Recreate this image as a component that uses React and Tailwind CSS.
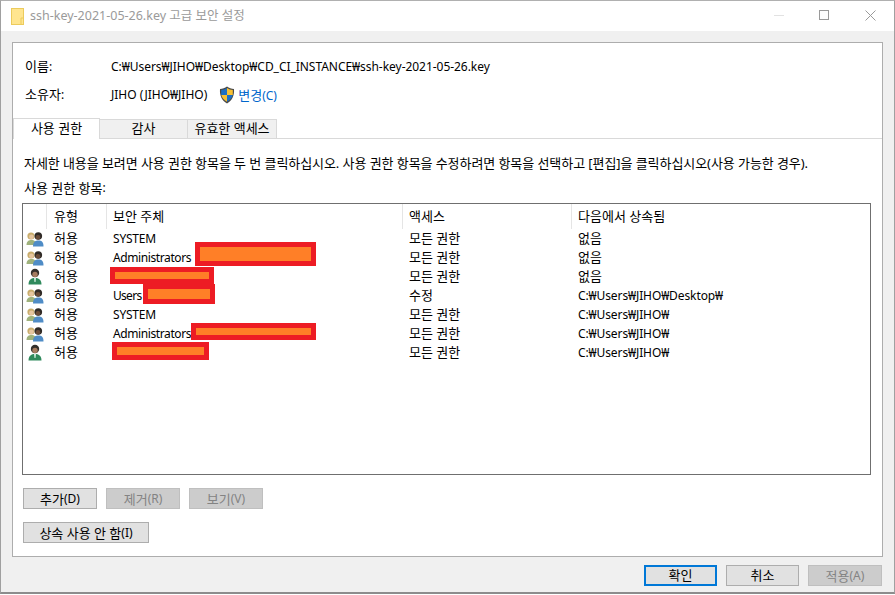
const font = "font-['Noto_Sans','Noto_Sans_CJK_KR',sans-serif]"

const rows = [
  { kind: 'group', name: 'SYSTEM', access: '모든 권한', from: '없음', track: 'tracking-[-0.2px]' },
  {
    kind: 'group',
    name: 'Administrators',
    access: '모든 권한',
    from: '없음',
    track: 'tracking-[-0.4px]',
    mark: 'left-[88px] top-[-6px] w-[121px] h-[24px]',
  },
  {
    kind: 'user',
    name: '',
    access: '모든 권한',
    from: '없음',
    mark: 'left-[3px] top-[0px] w-[104px] h-[17px]',
  },
  {
    kind: 'group',
    name: 'Users',
    access: '수정',
    from: 'C:₩Users₩JIHO₩Desktop₩',
    track: 'tracking-[-0.7px]',
    mark: 'left-[36px] top-[-2px] w-[72px] h-[20px]',
  },
  { kind: 'group', name: 'SYSTEM', access: '모든 권한', from: 'C:₩Users₩JIHO₩', track: 'tracking-[-0.2px]' },
  {
    kind: 'group',
    name: 'Administrators',
    access: '모든 권한',
    from: 'C:₩Users₩JIHO₩',
    track: 'tracking-[-0.4px]',
    mark: 'left-[84px] top-[-1px] w-[125px] h-[17px]',
  },
  {
    kind: 'user',
    name: '',
    access: '모든 권한',
    from: 'C:₩Users₩JIHO₩',
    mark: 'left-[5px] top-[-1px] w-[97px] h-[18px]',
  },
]

// hangul runs a size up from the latin, the way Malgun sits next to Segoe
function K({ children }) {
  return <span className="text-[13px]">{children}</span>
}

function GroupIcon() {
  return (
    <svg width="18" height="16" viewBox="0 0 18 16">
      <path d="M0.5 14 C0.5 10 3 9 5.5 9 C8 9 10 10 10 14 Z" fill="#9fb27c" />
      <circle cx="5" cy="5" r="3.6" fill="#c9ad6c" />
      <circle cx="5.4" cy="5.8" r="2.4" fill="#e6c6a0" />
      <path d="M7 15.5 C7 10.5 9.5 9.5 12.5 9.5 C15.5 9.5 17.5 10.5 17.5 15.5 Z" fill="#4f8cc6" />
      <circle cx="12.3" cy="5" r="3.8" fill="#2f2a26" />
      <circle cx="12" cy="6.2" r="2.3" fill="#6b4c38" />
    </svg>
  )
}

function UserIcon() {
  return (
    <svg width="14" height="17" viewBox="0 0 14 17">
      <path d="M0.5 16.5 C0.5 11.5 3.5 10 7 10 C10.5 10 13.5 11.5 13.5 16.5 Z" fill="#2f8a5c" />
      <path d="M6 10 L8 10 L7.5 14 L6.5 14 Z" fill="#d8efe2" />
      <circle cx="7" cy="5" r="4.2" fill="#332f2b" />
      <circle cx="7" cy="6.4" r="2.7" fill="#a57c60" />
    </svg>
  )
}

function ShieldIcon() {
  return (
    <svg width="16" height="18" viewBox="0 0 16 18">
      <path d="M8 0.5 C10 2 12.5 2.8 15 3 C15.5 10 13 14.5 8 17.5 C3 14.5 0.5 10 1 3 C3.5 2.8 6 2 8 0.5 Z" fill="#4a4a4a" />
      <path d="M8 2 C6.2 3.2 4.2 3.9 2.2 4.1 L2.2 9 L8 9 Z" fill="#1c6fc4" />
      <path d="M8 2 C9.8 3.2 11.8 3.9 13.8 4.1 L13.8 9 L8 9 Z" fill="#f8c032" />
      <path d="M2.3 9 L8 9 L8 15.8 C4.6 13.6 2.7 11.6 2.3 9 Z" fill="#f8c032" />
      <path d="M13.7 9 L8 9 L8 15.8 C11.4 13.6 13.3 11.6 13.7 9 Z" fill="#1c6fc4" />
    </svg>
  )
}

function FileIcon() {
  return (
    <svg width="13" height="17" viewBox="0 0 13 17">
      <rect x="0.5" y="0.5" width="12" height="16" fill="#ffe58f" stroke="#eccb5c" />
      <path d="M10 10 L10 16.5" stroke="#eccb5c" />
      <path d="M10 10 L12.5 10" stroke="#eccb5c" />
    </svg>
  )
}

function Btn({ children, disabled, primary, className = '' }) {
  let tone = 'bg-[#e1e1e1] border border-[#adadad] text-black'
  if (disabled) tone = 'bg-[#cccccc] border border-[#bfbfbf] text-[#838383]'
  if (primary) tone = 'bg-[#e1e1e1] border-2 border-[#0078d7] text-black'
  return (
    <button type="button" className={`h-[21px] flex items-center justify-center ${tone} ${className}`}>
      {children}
    </button>
  )
}

export default function App() {
  return (
    <div className={`w-[895px] h-[595px] bg-white text-[12px] leading-[16px] text-black ${font}`}>
      <div className="w-[895px] h-[594px] flex flex-col border-x border-t border-b-2 border-x-[#a0a0a0] border-t-[#b0b0b0] border-b-[#8c8c8c]">
        <div className="h-[30px] shrink-0 bg-white flex items-center">
          <div className="ml-[10px] mt-[1px] flex">
            <FileIcon />
          </div>
          <div className="ml-[6px] text-[12.5px] text-[#9a9a9a]">ssh-key-2021-05-26.key 고급 보안 설정</div>
          <div className="ml-auto mb-[2px] flex items-center">
            <div className="w-[10px] h-px bg-[#e2e2e2] mr-[35px]" />
            <div className="w-[10px] h-[10px] border border-[#9a9a9a] mr-[36px]" />
            <svg width="11" height="11" viewBox="0 0 11 11" className="mr-[18px]">
              <path d="M0.5 0.5 L10.5 10.5 M10.5 0.5 L0.5 10.5" stroke="#9a9a9a" fill="none" />
            </svg>
          </div>
        </div>

        <div className="flex-1 bg-[#f0f0f0] flex flex-col pl-[11px] pr-[11px] pt-[11px]">
          <div className="w-[871px] h-[515px] bg-white border border-[#adadad] flex flex-col">
            <div className="h-[75px] shrink-0 pl-[12px] pt-[16px]">
              <div className="flex h-[16px] items-center">
                <div className="w-[86px] pb-[2px]"><K>이름</K>:</div>
                <div className="tracking-[-0.04px]">C:₩Users₩JIHO₩Desktop₩CD_CI_INSTANCE₩ssh-key-2021-05-26.key</div>
              </div>
              <div className="flex h-[18px] items-center mt-[11px]">
                <div className="w-[86px] pb-[2px]"><K>소유자</K>:</div>
                <div>JIHO (JIHO₩JIHO)</div>
                <div className="ml-[12px] flex">
                  <ShieldIcon />
                </div>
                <div className="ml-[3px] text-[#0066cc]"><K>변경</K>(C)</div>
              </div>
            </div>

            <div className="h-[21px] shrink-0 flex items-end border-b border-[#d9d9d9]">
              <div className="w-[87px] h-[21px] -mb-px pb-[2px] bg-white border-x border-t border-[#d9d9d9] flex items-center justify-center">
                <K>사용 권한</K>
              </div>
              <div className="w-[88px] h-[19px] pb-[2px] bg-[#f0f0f0] border-t border-r border-[#d9d9d9] flex items-center justify-center">
                <K>감사</K>
              </div>
              <div className="w-[89px] h-[19px] pb-[2px] bg-[#f0f0f0] border-t border-r border-[#d9d9d9] flex items-center justify-center">
                <K>유효한 액세스</K>
              </div>
            </div>

            <div className="flex-1 flex flex-col pl-[9px] pr-[10px]">
              <div className="mt-[16px] pl-[2px] h-[16px] flex items-center whitespace-nowrap text-[13px] tracking-[-0.07px]">
                자세한 내용을 보려면 사용 권한 항목을 두 번 클릭하십시오. 사용 권한 항목을 수정하려면 항목을 선택하고 [편집]을 클릭하십시오(사용 가능한 경우).
              </div>
              <div className="mt-[9px] pl-[2px] h-[16px] flex items-center"><K>사용 권한 항목</K>:</div>

              <div className="mt-[7px] w-[849px] h-[272px] bg-white border border-[#6f6f6f]">
                <div className="flex h-[25px]">
                  <div className="w-[24px] border-r border-[#e5e5e5]" />
                  <div className="w-[60px] pl-[7px] pb-[2px] border-r border-[#e5e5e5] flex items-center"><K>유형</K></div>
                  <div className="w-[296px] pl-[6px] pb-[2px] border-r border-[#e5e5e5] flex items-center"><K>보안 주체</K></div>
                  <div className="w-[169px] pl-[6px] pb-[2px] border-r border-[#e5e5e5] flex items-center"><K>액세스</K></div>
                  <div className="pl-[6px] pb-[2px] flex items-center"><K>다음에서 상속됨</K></div>
                </div>
                {rows.map((row, i) => (
                  <div key={i} className="flex h-[19px] items-center">
                    <div className="w-[24px] pl-[3px] flex items-center">
                      {row.kind === 'group' ? <GroupIcon /> : <div className="pl-[2px] flex"><UserIcon /></div>}
                    </div>
                    <div className="w-[60px] pl-[7px] pb-px"><K>허용</K></div>
                    <div className={`w-[296px] pl-[6px] relative self-stretch flex items-center ${row.track ?? ''}`}>
                      {row.name}
                      {row.mark ? (
                        <div className={`absolute border-[5px] border-[#ed1c24] bg-[#ff7f27] ${row.mark}`} />
                      ) : null}
                    </div>
                    <div className="w-[169px] pl-[6px] pb-px"><K>{row.access}</K></div>
                    {row.from === '없음' ? (
                      <div className="pl-[6px] pb-px"><K>{row.from}</K></div>
                    ) : (
                      <div className="pl-[6px] tracking-[-0.1px]">{row.from}</div>
                    )}
                  </div>
                ))}
              </div>

              <div className="mt-[13px] ml-px flex gap-[9px]">
                <Btn className="w-[74px]"><K>추가</K>(D)</Btn>
                <Btn disabled className="w-[74px]"><K>제거</K>(R)</Btn>
                <Btn disabled className="w-[74px]"><K>보기</K>(V)</Btn>
              </div>
              <div className="mt-[13px] ml-px">
                <Btn className="w-[126px]"><K>상속 사용 안 함</K>(I)</Btn>
              </div>
            </div>
          </div>

          <div className="mt-[8px] flex justify-end gap-[9px] pr-px">
            <Btn primary className="w-[73px] pb-[2px]"><K>확인</K></Btn>
            <Btn className="w-[73px] pb-[2px]"><K>취소</K></Btn>
            <Btn disabled className="w-[74px]"><K>적용</K>(A)</Btn>
          </div>
        </div>
      </div>
    </div>
  )
}
